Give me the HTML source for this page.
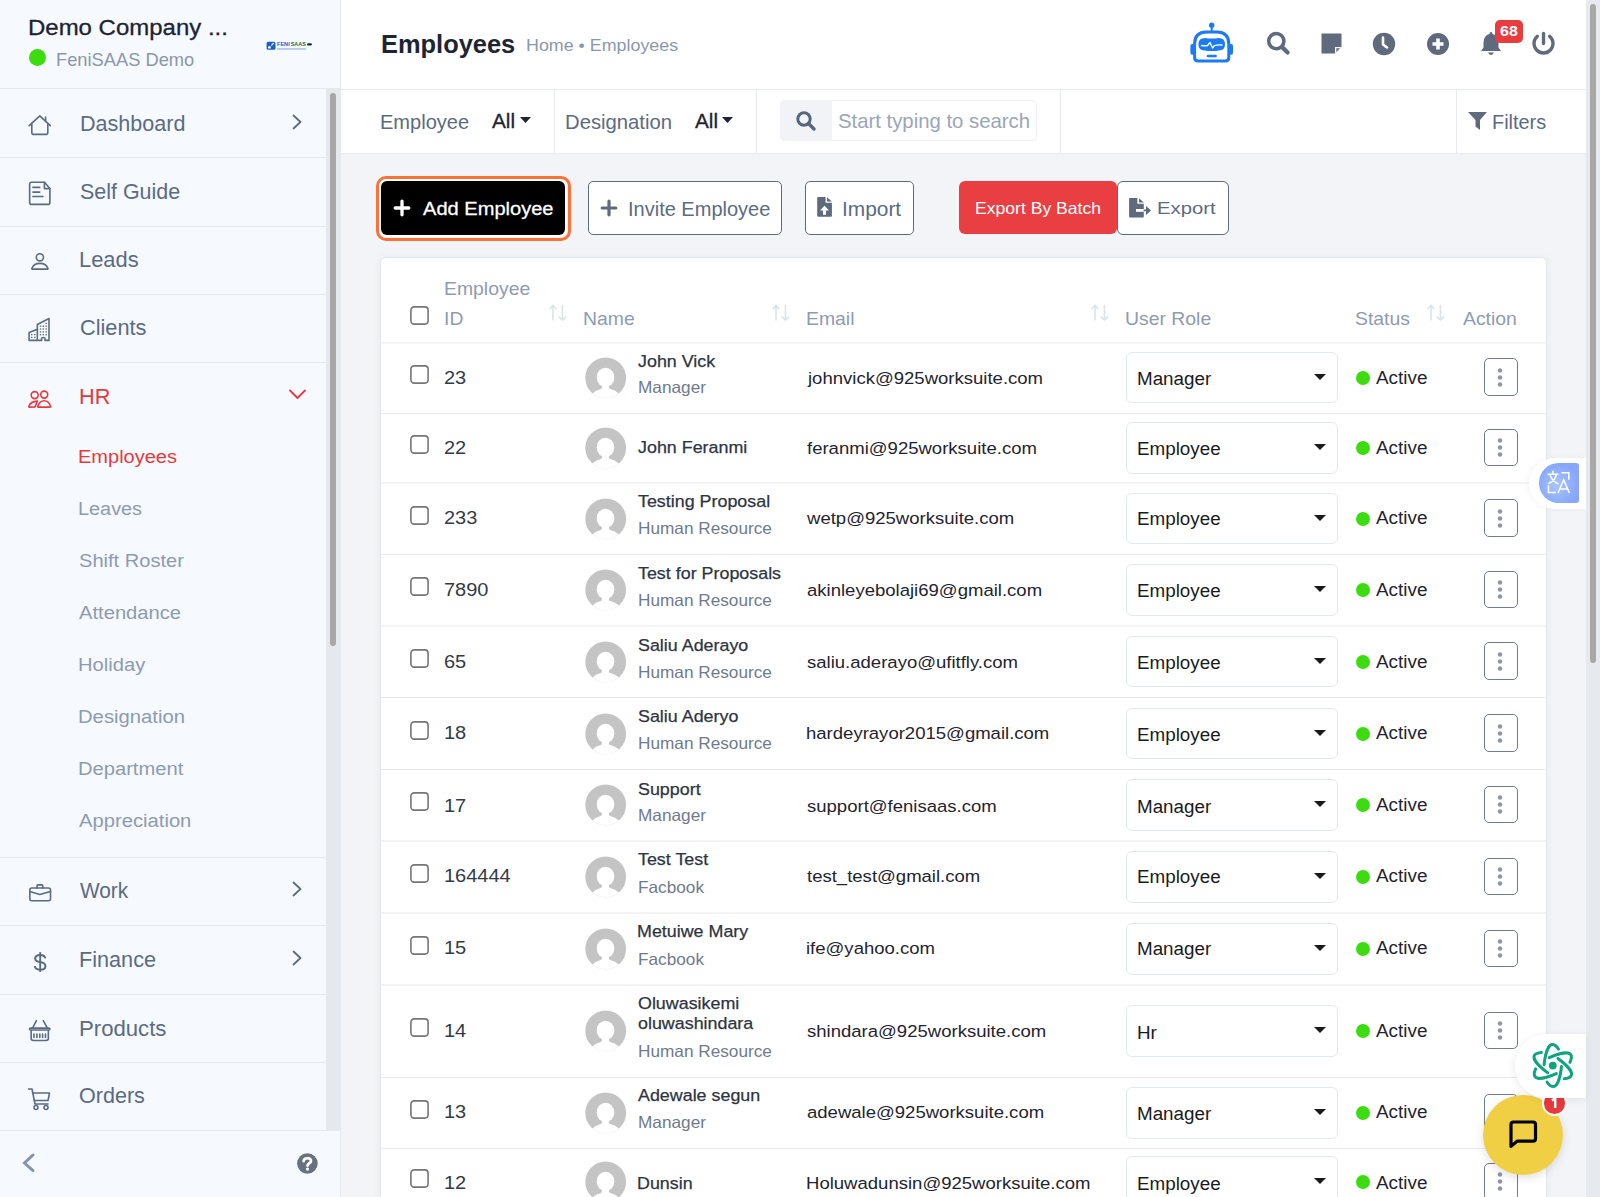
<!DOCTYPE html>
<html><head><meta charset="utf-8"><title>Employees</title>
<style>
html,body{margin:0;padding:0;width:1600px;height:1197px;overflow:hidden;background:#f2f4f7;font-family:"Liberation Sans", sans-serif;}
.b{position:absolute;display:block;}
.t{position:absolute;white-space:nowrap;line-height:1;font-family:"Liberation Sans", sans-serif;transform-origin:0 0;}
</style></head><body>
<div class="b" style="left:0px;top:0px;width:340px;height:1197px;background:#f6f9fe"></div>
<div class="b" style="left:340px;top:0px;width:1px;height:1197px;background:#e6eaf0"></div>
<div class="b" style="left:341px;top:0px;width:1245px;height:89px;background:#fff"></div>
<div class="b" style="left:341px;top:89px;width:1245px;height:1px;background:#e8ecf1"></div>
<div class="b" style="left:341px;top:90px;width:1245px;height:63px;background:#fff"></div>
<div class="b" style="left:341px;top:153px;width:1245px;height:1px;background:#e8ecf1"></div>
<div class="b" style="left:341px;top:154px;width:1245px;height:1043px;background:#f2f4f7"></div>
<div class="t" style="left:27.88px;top:16.00px;font-size:22.80px;color:#1c2433;font-weight:400;transform:scaleX(1.0517);-webkit-text-stroke:0.3px #1c2433">Demo Company ...</div>
<div class="b" style="left:28.5px;top:48.5px;width:17px;height:17px;background:#3ddc10;border-radius:50%"></div>
<div class="t" style="left:56.37px;top:51.00px;font-size:18.20px;color:#8a97ab;font-weight:400;transform:scaleX(1.0059);">FeniSAAS Demo</div>
<svg class="b" style="left:262px;top:36px;" width="54" height="18" viewBox="0 0 54 18"><rect x="4.6" y="5.8" width="8.9" height="8" rx="1.6" fill="#1a5fc8"/><rect x="6.1" y="10.2" width="2.7" height="2.4" rx="0.5" fill="#fff"/><path d="M8.8 10 Q9.5 7 12.3 6.6 Q11.8 9.6 8.8 10 Z" fill="#fff"/>
<text x="15" y="10.2" font-family="Liberation Sans" font-size="5.7" font-weight="700" fill="#1d5cc0" textLength="12.7" lengthAdjust="spacingAndGlyphs">FENI</text>
<text x="28.7" y="10.2" font-family="Liberation Sans" font-size="5.7" font-weight="700" fill="#1c6b3a" textLength="15.2" lengthAdjust="spacingAndGlyphs">SAAS</text>
<rect x="45" y="7.3" width="4.9" height="2.2" rx="1.1" fill="#1a2b3a"/><rect x="15" y="12.25" width="28.9" height="1.4" fill="#5a86cf" opacity="0.55"/></svg>
<div class="b" style="left:0px;top:88px;width:340px;height:1px;background:#e6eaf0"></div>
<div class="b" style="left:326px;top:89px;width:14px;height:1041px;background:#e5e9ee"></div>
<div class="b" style="left:330px;top:93px;width:6px;height:553px;background:#a8a8a8;border-radius:3px"></div>
<div class="t" style="left:79.72px;top:112.00px;font-size:22.90px;color:#5b6b82;font-weight:400;transform:scaleX(0.9417);">Dashboard</div>
<svg class="b" style="left:291px;top:114.00000000000001px;" width="12" height="16" viewBox="0 0 12 16"><path d="M2.5 1.5 L9.5 8 L2.5 14.5" fill="none" stroke="#5b6b82" stroke-width="1.8" stroke-linecap="round" stroke-linejoin="round"/></svg>
<div class="b" style="left:0px;top:157px;width:326px;height:1px;background:#e6eaf0"></div>
<div class="t" style="left:79.93px;top:180.00px;font-size:22.90px;color:#5b6b82;font-weight:400;transform:scaleX(0.9365);">Self Guide</div>
<div class="b" style="left:0px;top:226px;width:326px;height:1px;background:#e6eaf0"></div>
<div class="t" style="left:78.89px;top:248.00px;font-size:22.90px;color:#5b6b82;font-weight:400;transform:scaleX(0.9551);">Leads</div>
<div class="b" style="left:0px;top:294px;width:326px;height:1px;background:#e6eaf0"></div>
<div class="t" style="left:79.58px;top:316.00px;font-size:22.90px;color:#5b6b82;font-weight:400;transform:scaleX(0.9500);">Clients</div>
<div class="b" style="left:0px;top:362px;width:326px;height:1px;background:#e6eaf0"></div>
<svg class="b" style="left:28px;top:112px;" width="24" height="26" viewBox="0 0 24 26"><path d="M1.2 13.7 L11.8 3.8 L22.3 13.7" fill="none" stroke="#5b6b82" stroke-width="1.6" stroke-linejoin="round" stroke-linecap="round"/><path d="M3.8 11.5 V20.4 Q3.8 22.4 5.8 22.4 H17.8 Q19.8 22.4 19.8 20.4 V11.5" fill="none" stroke="#5b6b82" stroke-width="1.6" stroke-linejoin="round" stroke-linecap="round"/><path d="M17.6 5 V9.5" fill="none" stroke="#5b6b82" stroke-width="1.6" stroke-linejoin="round" stroke-linecap="round" stroke-width="2"/></svg>
<svg class="b" style="left:28px;top:180px;" width="24" height="26" viewBox="0 0 24 26"><path d="M3.6 2.2 H16.4 L21.9 8.6 V22.4 Q21.9 24.4 19.9 24.4 H3.6 Q1.65 24.4 1.65 22.4 V4.2 Q1.65 2.2 3.6 2.2 Z" fill="none" stroke="#5b6b82" stroke-width="1.6" stroke-linejoin="round" stroke-linecap="round"/><path d="M16.4 2.2 V8.6 H21.9" fill="none" stroke="#5b6b82" stroke-width="1.6" stroke-linejoin="round" stroke-linecap="round" stroke-width="1.3"/><path d="M4.9 7.4 H11.8 M4.9 12.1 H11.8 M4.9 16.5 H15" fill="none" stroke="#5b6b82" stroke-width="1.6" stroke-linejoin="round" stroke-linecap="round"/></svg>
<svg class="b" style="left:30px;top:252px;" width="20" height="20" viewBox="0 0 20 20"><circle cx="9.9" cy="5.3" r="3.6" fill="none" stroke="#5b6b82" stroke-width="1.6" stroke-linejoin="round" stroke-linecap="round" stroke-width="1.5"/><path d="M2.3 17.1 Q1.5 17.1 1.9 16.2 Q4 11.4 9.9 11.4 Q15.8 11.4 17.9 16.2 Q18.3 17.1 17.5 17.1 Z" fill="none" stroke="#5b6b82" stroke-width="1.6" stroke-linejoin="round" stroke-linecap="round" stroke-width="1.5"/></svg>
<svg class="b" style="left:27px;top:317px;" width="25" height="25" viewBox="0 0 25 25"><path d="M2.1 23.4 V15.5 L10.35 12.3 V7.5 L22 1.5 V23.4 H18 V21.4 Q18 20.5 16.3 20.5 Q14.6 20.5 14.6 21.4 V23.4 Z M10.35 12.3 V23.4" fill="none" stroke="#5b6b82" stroke-width="1.6" stroke-linejoin="round" stroke-linecap="round"/><g fill="#5b6b82"><rect x="12.80" y="8.55" width="1.4" height="1.3"/><rect x="15.60" y="8.55" width="1.4" height="1.3"/><rect x="18.50" y="8.55" width="1.4" height="1.3"/><rect x="12.80" y="11.35" width="1.4" height="1.3"/><rect x="15.60" y="11.35" width="1.4" height="1.3"/><rect x="18.50" y="11.35" width="1.4" height="1.3"/><rect x="12.80" y="14.25" width="1.4" height="1.3"/><rect x="15.60" y="14.25" width="1.4" height="1.3"/><rect x="18.50" y="14.25" width="1.4" height="1.3"/><rect x="12.80" y="17.05" width="1.4" height="1.3"/><rect x="15.60" y="17.05" width="1.4" height="1.3"/><rect x="18.50" y="17.05" width="1.4" height="1.3"/><rect x="18.50" y="5.75" width="1.4" height="1.3"/><rect x="4.00" y="16.95" width="1.4" height="1.3"/><rect x="7.10" y="16.95" width="1.4" height="1.3"/><rect x="4.00" y="19.75" width="1.4" height="1.3"/><rect x="7.10" y="19.75" width="1.4" height="1.3"/></g></svg>
<svg class="b" style="left:27px;top:389px;" width="26" height="21" viewBox="0 0 26 21"><circle cx="7.7" cy="6.1" r="3.5" fill="none" stroke="#e8383d" stroke-width="1.6" stroke-linejoin="round" stroke-linecap="round" stroke-width="1.5"/><circle cx="17.2" cy="5.6" r="3.5" fill="none" stroke="#e8383d" stroke-width="1.6" stroke-linejoin="round" stroke-linecap="round" stroke-width="1.5"/><path d="M2.4 18.1 Q1.6 18.1 1.9 17.2 Q3.5 12.4 10.4 12.1 L8.1 17.9 Z" fill="none" stroke="#e8383d" stroke-width="1.6" stroke-linejoin="round" stroke-linecap="round" stroke-width="1.5"/><path d="M11.3 18.1 Q10.5 18.1 10.8 17.2 Q12.7 11.7 17.2 11.7 Q21.8 11.7 23.6 17.2 Q23.9 18.1 23.1 18.1 Z" fill="none" stroke="#e8383d" stroke-width="1.6" stroke-linejoin="round" stroke-linecap="round" stroke-width="1.5"/></svg>
<div class="t" style="left:79.20px;top:385.00px;font-size:22.90px;color:#e8383d;font-weight:400;transform:scaleX(0.9478);">HR</div>
<svg class="b" style="left:288px;top:388px;" width="19" height="12" viewBox="0 0 19 12"><path d="M2 2.5 L9.5 10 L17 2.5" fill="none" stroke="#e8383d" stroke-width="1.8" stroke-linecap="round" stroke-linejoin="round"/></svg>
<div class="t" style="left:77.84px;top:447.00px;font-size:19.20px;color:#e8383d;font-weight:400;transform:scaleX(1.0428);">Employees</div>
<div class="t" style="left:77.65px;top:499.00px;font-size:19.20px;color:#8d9bb0;font-weight:400;transform:scaleX(1.0349);">Leaves</div>
<div class="t" style="left:78.57px;top:551.00px;font-size:19.20px;color:#8d9bb0;font-weight:400;transform:scaleX(1.0471);">Shift Roster</div>
<div class="t" style="left:79.20px;top:603.00px;font-size:19.20px;color:#8d9bb0;font-weight:400;transform:scaleX(1.0512);">Attendance</div>
<div class="t" style="left:77.62px;top:655.00px;font-size:19.20px;color:#8d9bb0;font-weight:400;transform:scaleX(1.0507);">Holiday</div>
<div class="t" style="left:77.62px;top:707.00px;font-size:19.20px;color:#8d9bb0;font-weight:400;transform:scaleX(1.0554);">Designation</div>
<div class="t" style="left:77.63px;top:759.00px;font-size:19.20px;color:#8d9bb0;font-weight:400;transform:scaleX(1.0498);">Department</div>
<div class="t" style="left:79.20px;top:811.00px;font-size:19.20px;color:#8d9bb0;font-weight:400;transform:scaleX(1.0534);">Appreciation</div>
<div class="b" style="left:0px;top:857px;width:326px;height:1px;background:#e6eaf0"></div>
<div class="t" style="left:80.40px;top:879.00px;font-size:22.90px;color:#5b6b82;font-weight:400;transform:scaleX(0.9088);">Work</div>
<svg class="b" style="left:291px;top:881.4000000000001px;" width="12" height="16" viewBox="0 0 12 16"><path d="M2.5 1.5 L9.5 8 L2.5 14.5" fill="none" stroke="#5b6b82" stroke-width="1.8" stroke-linecap="round" stroke-linejoin="round"/></svg>
<div class="b" style="left:0px;top:925px;width:326px;height:1px;background:#e6eaf0"></div>
<div class="t" style="left:78.71px;top:948.00px;font-size:22.90px;color:#5b6b82;font-weight:400;transform:scaleX(0.9460);">Finance</div>
<svg class="b" style="left:291px;top:950.2px;" width="12" height="16" viewBox="0 0 12 16"><path d="M2.5 1.5 L9.5 8 L2.5 14.5" fill="none" stroke="#5b6b82" stroke-width="1.8" stroke-linecap="round" stroke-linejoin="round"/></svg>
<div class="b" style="left:0px;top:994px;width:326px;height:1px;background:#e6eaf0"></div>
<div class="t" style="left:78.67px;top:1017.00px;font-size:22.90px;color:#5b6b82;font-weight:400;transform:scaleX(0.9674);">Products</div>
<div class="b" style="left:0px;top:1062px;width:326px;height:1px;background:#e6eaf0"></div>
<div class="t" style="left:79.39px;top:1084.00px;font-size:22.90px;color:#5b6b82;font-weight:400;transform:scaleX(0.9414);">Orders</div>
<svg class="b" style="left:27px;top:883px;" width="26" height="21" viewBox="0 0 26 21"><rect x="2.85" y="4.95" width="20.65" height="12.8" rx="2" fill="none" stroke="#5b6b82" stroke-width="1.6" stroke-linejoin="round" stroke-linecap="round" stroke-width="1.5"/><path d="M10.05 4.95 V2.6 Q10.05 1.85 10.8 1.85 H15 Q15.75 1.85 15.75 2.6 V4.95" fill="none" stroke="#5b6b82" stroke-width="1.6" stroke-linejoin="round" stroke-linecap="round" stroke-width="1.5"/><path d="M2.85 8.6 L12.8 11.4 L23.5 8.6" fill="none" stroke="#5b6b82" stroke-width="1.6" stroke-linejoin="round" stroke-linecap="round" stroke-width="1.5"/></svg>
<svg class="b" style="left:30px;top:950px;" width="20" height="24" viewBox="0 0 20 24"><path d="M15.3 8.3 Q14.8 4.9 10.2 4.9 Q5.2 4.9 5.2 8.5 Q5.2 11.3 10.2 12.1 Q15.4 12.9 15.4 16.2 Q15.4 19.7 10.2 19.7 Q5.1 19.7 4.8 16" fill="none" stroke="#5b6b82" stroke-width="2"/><path d="M10.2 2.1 V21.9" stroke="#5b6b82" stroke-width="1.9"/></svg>
<svg class="b" style="left:27px;top:1018px;" width="26" height="26" viewBox="0 0 26 26"><rect x="2.55" y="10.15" width="20.4" height="1.9" rx="0.95" fill="none" stroke="#5b6b82" stroke-width="1.6" stroke-linejoin="round" stroke-linecap="round" stroke-width="1.5"/><path d="M4.15 12.8 V20.6 Q4.15 22.55 6.4 22.55 H19.1 Q21.35 22.55 21.35 20.6 V12.8" fill="none" stroke="#5b6b82" stroke-width="1.6" stroke-linejoin="round" stroke-linecap="round" stroke-width="1.5"/><path d="M9.4 2.6 L5.8 9.6 M16.3 2.6 L20.1 9.6" fill="none" stroke="#5b6b82" stroke-width="1.6" stroke-linejoin="round" stroke-linecap="round" stroke-width="1.5"/><path d="M7 16.1 V19.5 M9.9 16.1 V19.5 M12.8 16.1 V19.5 M15.6 16.1 V19.5 M18.5 16.1 V19.5" fill="none" stroke="#5b6b82" stroke-width="1.6" stroke-linejoin="round" stroke-linecap="round" stroke-width="1.6"/></svg>
<svg class="b" style="left:27px;top:1086.8px;" width="25" height="24" viewBox="0 0 25 24"><path d="M1.5 2 H5 L8 17 H21" fill="none" stroke="#5b6b82" stroke-width="1.6" stroke-linejoin="round" stroke-linecap="round"/><path d="M5.8 6 H22.5 L21 13.5 H7.3" fill="none" stroke="#5b6b82" stroke-width="1.6" stroke-linejoin="round" stroke-linecap="round"/><circle cx="9" cy="20.5" r="2" fill="none" stroke="#5b6b82" stroke-width="1.6" stroke-linejoin="round" stroke-linecap="round"/><circle cx="19" cy="20.5" r="2" fill="none" stroke="#5b6b82" stroke-width="1.6" stroke-linejoin="round" stroke-linecap="round"/></svg>
<div class="b" style="left:0px;top:1130px;width:340px;height:67px;background:#f6f9fe"></div>
<div class="b" style="left:0px;top:1130px;width:340px;height:1px;background:#e6eaf0"></div>
<svg class="b" style="left:20px;top:1150px;" width="18" height="26" viewBox="0 0 18 26"><path d="M13 5 L4.5 13 L13 20.6" fill="none" stroke="#8794a8" stroke-width="3" stroke-linecap="round" stroke-linejoin="miter"/></svg>
<svg class="b" style="left:296px;top:1151.5px;" width="23" height="23" viewBox="0 0 23 23"><circle cx="11.4" cy="11.5" r="10.3" fill="#69717e"/><path d="M7.6 9.2 C7.9 5.3 15.3 5.2 15 9.1 C14.8 11.2 11.7 11.6 11.5 13.6" fill="none" stroke="#fff" stroke-width="2.7" stroke-linecap="round"/><circle cx="11.5" cy="17.1" r="1.6" fill="#fff"/></svg>
<div class="t" style="left:381.16px;top:31.00px;font-size:26.70px;color:#1d2534;font-weight:700;transform:scaleX(0.9524);">Employees</div>
<div class="t" style="left:526.40px;top:37.00px;font-size:17.10px;color:#8a97ab;font-weight:400;transform:scaleX(1.0443);">Home • Employees</div>
<svg class="b" style="left:1189px;top:21px;" width="46" height="43" viewBox="0 0 46 43"><circle cx="22.7" cy="4.3" r="2.7" fill="#1b7bf3"/><rect x="21.7" y="5" width="2" height="6" fill="#1b7bf3"/>
<path d="M9.2 40 H36.2 Q39.8 40 39.8 36.4 V23 Q39.8 11 28 11 H17.4 Q5.6 11 5.6 23 V36.4 Q5.6 40 9.2 40 Z" fill="none" stroke="#1b7bf3" stroke-width="3"/>
<rect x="1.4" y="23" width="4" height="10.7" rx="1.8" fill="#1b7bf3"/><rect x="40" y="23" width="4" height="10.7" rx="1.8" fill="#1b7bf3"/>
<path d="M9.4 23 Q9.4 17 16 17 Q22.7 18 29.5 17 Q36 17 36 23 Q36 29.5 30 29.5 Q22.7 30.5 15.5 29.5 Q9.4 29.5 9.4 23 Z" fill="#1b7bf3"/>
<path d="M12.5 24.5 Q15.5 25 18.5 24.5 L21 21.5 L23.5 27 L25.5 24.5 Q29 23.5 33 24" fill="none" stroke="#fff" stroke-width="1.3" stroke-linejoin="round" stroke-linecap="round"/>
<rect x="17.7" y="33.7" width="10.2" height="2.5" rx="1.2" fill="#1b7bf3"/></svg>
<svg class="b" style="left:1265px;top:30px;" width="28" height="28" viewBox="0 0 28 28"><circle cx="11.3" cy="11.2" r="7.6" fill="none" stroke="#5f6b7c" stroke-width="3.5"/><path d="M17 17 L22.6 22.6" stroke="#5f6b7c" stroke-width="4.2" stroke-linecap="round"/></svg>
<svg class="b" style="left:1320px;top:32px;" width="23" height="23" viewBox="0 0 23 23"><path d="M1.5 1.5 H21.5 V15 L15 21.5 H1.5 Z" fill="#5f6b7c"/><path d="M15 21.5 V15 H21.5" fill="#fff"/><path d="M16.3 20 V16.3 H20" fill="#5f6b7c"/></svg>
<svg class="b" style="left:1372px;top:32px;" width="24" height="24" viewBox="0 0 24 24"><circle cx="12" cy="12" r="11.2" fill="#5f6b7c"/><path d="M11 5.5 V12.5 L15 15.5" fill="none" stroke="#fff" stroke-width="2.6" stroke-linecap="round" stroke-linejoin="round"/></svg>
<svg class="b" style="left:1426px;top:32px;" width="24" height="24" viewBox="0 0 24 24"><circle cx="12" cy="12" r="11" fill="#5f6b7c"/><path d="M12 6.5 V17.5 M6.5 12 H17.5" stroke="#fff" stroke-width="3.6"/></svg>
<svg class="b" style="left:1479px;top:30px;" width="24" height="26" viewBox="0 0 24 26"><path d="M12 2 Q13.5 2 13.5 4 Q19.5 5.5 19.5 12.5 V17.5 L22 21 H2 L4.5 17.5 V12.5 Q4.5 5.5 10.5 4 Q10.5 2 12 2 Z" fill="#5f6b7c"/><path d="M9 22.5 H15 Q13.5 25 12 25 Q10.5 25 9 22.5 Z" fill="#5f6b7c"/></svg>
<div class="b" style="left:1495px;top:20px;width:28px;height:22.5px;background:#ea3b3f;border-radius:5px"></div>
<div class="t" style="left:1500.10px;top:23.00px;font-size:15.50px;color:#fff;font-weight:700;transform:scaleX(1.0324);">68</div>
<svg class="b" style="left:1531px;top:31px;" width="25" height="26" viewBox="0 0 25 26"><path d="M6.4 5.2 A9.5 9.5 0 1 0 18.6 5.2" fill="none" stroke="#5f6b7c" stroke-width="3.3" stroke-linecap="round"/><path d="M12.5 2.3 V12.6" stroke="#5f6b7c" stroke-width="3.3" stroke-linecap="round"/></svg>
<div class="b" style="left:1586px;top:0px;width:14px;height:1197px;background:#e6eaef"></div>
<div class="b" style="left:1590px;top:4px;width:6px;height:659px;background:#a8a8a8;border-radius:3px"></div>
<div class="t" style="left:380.43px;top:111.00px;font-size:21.00px;color:#5b6b82;font-weight:400;transform:scaleX(0.9544);">Employee</div>
<div class="t" style="left:492.00px;top:111.00px;font-size:20.30px;color:#1d2534;font-weight:400;transform:scaleX(1.0249);-webkit-text-stroke:0.3px #1d2534">All</div>
<svg class="b" style="left:519px;top:116px;" width="13" height="8" viewBox="0 0 13 8"><path d="M1 1 H12 L6.5 7 Z" fill="#1d2534"/></svg>
<div class="b" style="left:554px;top:90px;width:1px;height:63px;background:#e8ecf1"></div>
<div class="t" style="left:565.42px;top:111.00px;font-size:21.00px;color:#5b6b82;font-weight:400;transform:scaleX(0.9645);">Designation</div>
<div class="t" style="left:695.00px;top:111.00px;font-size:20.30px;color:#1d2534;font-weight:400;transform:scaleX(1.0249);-webkit-text-stroke:0.3px #1d2534">All</div>
<svg class="b" style="left:721px;top:116px;" width="13" height="8" viewBox="0 0 13 8"><path d="M1 1 H12 L6.5 7 Z" fill="#1d2534"/></svg>
<div class="b" style="left:756px;top:90px;width:1px;height:63px;background:#e8ecf1"></div>
<div class="b" style="left:780px;top:100px;width:257px;height:41px;background:#fff;border:1px solid #eceff3;border-radius:5px;box-sizing:border-box"></div>
<div class="b" style="left:780px;top:100px;width:52px;height:41px;background:#f1f3f6;border-radius:5px 0 0 5px"></div>
<svg class="b" style="left:795px;top:110px;" width="22" height="22" viewBox="0 0 22 22"><circle cx="9" cy="9" r="6.2" fill="none" stroke="#56667d" stroke-width="3"/><path d="M13.5 13.5 L19 19" stroke="#56667d" stroke-width="3.4" stroke-linecap="round"/></svg>
<div class="t" style="left:837.96px;top:111.00px;font-size:20.30px;color:#9aa6b8;font-weight:400;transform:scaleX(1.0019);">Start typing to search</div>
<div class="b" style="left:1060px;top:90px;width:1px;height:63px;background:#e8ecf1"></div>
<div class="b" style="left:1456px;top:90px;width:1px;height:63px;background:#e8ecf1"></div>
<svg class="b" style="left:1467px;top:111px;" width="21" height="20" viewBox="0 0 21 20"><path d="M1 1 H20 L13 9 V19 L8.5 15.5 V9 Z" fill="#5f6b7c"/></svg>
<div class="t" style="left:1491.95px;top:113.00px;font-size:19.90px;color:#5b6b82;font-weight:400;transform:scaleX(1.0001);">Filters</div>
<div class="b" style="left:375.5px;top:175.5px;width:195px;height:65px;border:3.5px solid #fb7138;border-radius:10px;box-sizing:border-box"></div>
<div class="b" style="left:379px;top:179px;width:188px;height:58px;border:2px solid #fff;border-radius:8px;box-sizing:border-box"></div>
<div class="b" style="left:381px;top:181px;width:184px;height:54px;background:#000;border-radius:6px"></div>
<svg class="b" style="left:392px;top:198px;" width="20" height="20" viewBox="0 0 20 20"><path d="M10 3.2 V16.8 M3.2 10 H16.8" stroke="#fff" stroke-width="3.3" stroke-linecap="round"/></svg>
<div class="t" style="left:422.50px;top:199.00px;font-size:19.20px;color:#fff;font-weight:400;transform:scaleX(1.0460);-webkit-text-stroke:0.3px #fff">Add Employee</div>
<div class="b" style="left:588px;top:181px;width:194px;height:54px;background:#fff;border:1px solid #5e6b7e;border-radius:5px;box-sizing:border-box"></div>
<svg class="b" style="left:599px;top:198px;" width="20" height="20" viewBox="0 0 20 20"><path d="M10 3.2 V16.8 M3.2 10 H16.8" stroke="#5e6b7e" stroke-width="3.2" stroke-linecap="round"/></svg>
<div class="t" style="left:627.64px;top:199.00px;font-size:20.60px;color:#5b6b82;font-weight:400;transform:scaleX(0.9714);">Invite Employee</div>
<div class="b" style="left:805px;top:181px;width:109px;height:54px;background:#fff;border:1px solid #5e6b7e;border-radius:5px;box-sizing:border-box"></div>
<svg class="b" style="left:810px;top:190px;" width="30" height="35" viewBox="0 0 30 35"><path d="M7.2 8 Q7.2 7 8.2 7 H15.6 V12.7 H21.9 V25.75 Q21.9 26.75 20.9 26.75 H8.2 Q7.2 26.75 7.2 25.75 Z" fill="#5f6b7c"/><path d="M17 7.2 L21.9 11.6 H17 Z" fill="#5f6b7c"/><path d="M10 20.4 L14.5 15.8 L19 20.4 H16 V24.7 H13 V20.4 Z" fill="#fff"/></svg>
<div class="t" style="left:841.97px;top:199.00px;font-size:20.60px;color:#5b6b82;font-weight:400;transform:scaleX(1.0134);">Import</div>
<div class="b" style="left:959px;top:181px;width:158px;height:53px;background:#ea3f42;border-radius:6px"></div>
<div class="t" style="left:974.93px;top:200.00px;font-size:16.50px;color:#fff;font-weight:400;transform:scaleX(1.0656);">Export By Batch</div>
<div class="b" style="left:1117px;top:181px;width:111.5px;height:54px;background:#fff;border:1px solid #5e6b7e;border-radius:6px;box-sizing:border-box"></div>
<svg class="b" style="left:1120px;top:190px;" width="34" height="35" viewBox="0 0 34 35"><path d="M9.1 9 Q9.1 8 10.1 8 H17.4 V13.8 H23.8 V26.6 Q23.8 27.6 22.8 27.6 H10.1 Q9.1 27.6 9.1 26.6 Z" fill="#5f6b7c"/><path d="M19 8.2 L23.8 12.6 H19 Z" fill="#5f6b7c"/><path d="M16 19 H23.8 V21.8 H16 Z" fill="#fff"/><path d="M23.8 19.6 H26.2 V21.2 H23.8 Z M26 15.9 L31.1 20.4 L26 24.9 Z" fill="#5f6b7c"/></svg>
<div class="t" style="left:1156.82px;top:200.00px;font-size:17.40px;color:#5b6b82;font-weight:400;transform:scaleX(1.1656);">Export</div>
<div class="b" style="left:381px;top:258px;width:1165px;height:1000px;background:#fff;border-radius:5px;box-shadow:0 0 0 1px #e4e8ee, 0 0 9px rgba(70,90,120,0.07)"></div>
<svg class="b" style="left:409.5px;top:306px;" width="19" height="19" viewBox="0 0 19 19"><rect x="0.9" y="0.9" width="17.2" height="17.2" rx="3.3" fill="#fff" stroke="#767676" stroke-width="1.6"/></svg>
<div class="t" style="left:444.29px;top:280.00px;font-size:18.50px;color:#8e9bb0;font-weight:400;transform:scaleX(1.0478);">Employee</div>
<div class="t" style="left:444.29px;top:310.00px;font-size:18.50px;color:#8e9bb0;font-weight:400;transform:scaleX(1.0478);">ID</div>
<svg class="b" style="left:548.5px;top:303.5px;" width="18" height="18" viewBox="0 0 18 18"><g fill="none" stroke="#dde2ea" stroke-width="1.6"><path d="M4 16.4 V1.2 M0.6 5 L4 1.4 L7.4 5"/><path d="M13.4 0.9 V16.3 M9.9 12.6 L13.4 16.2 L16.9 12.6"/></g></svg>
<div class="t" style="left:583.19px;top:310.00px;font-size:18.50px;color:#8e9bb0;font-weight:400;transform:scaleX(1.0478);">Name</div>
<svg class="b" style="left:772px;top:303.5px;" width="18" height="18" viewBox="0 0 18 18"><g fill="none" stroke="#dde2ea" stroke-width="1.6"><path d="M4 16.4 V1.2 M0.6 5 L4 1.4 L7.4 5"/><path d="M13.4 0.9 V16.3 M9.9 12.6 L13.4 16.2 L16.9 12.6"/></g></svg>
<div class="t" style="left:806.49px;top:310.00px;font-size:18.50px;color:#8e9bb0;font-weight:400;transform:scaleX(1.0478);">Email</div>
<svg class="b" style="left:1090.5px;top:303.5px;" width="18" height="18" viewBox="0 0 18 18"><g fill="none" stroke="#dde2ea" stroke-width="1.6"><path d="M4 16.4 V1.2 M0.6 5 L4 1.4 L7.4 5"/><path d="M13.4 0.9 V16.3 M9.9 12.6 L13.4 16.2 L16.9 12.6"/></g></svg>
<div class="t" style="left:1125.09px;top:310.00px;font-size:18.50px;color:#8e9bb0;font-weight:400;transform:scaleX(1.0478);">User Role</div>
<div class="t" style="left:1354.89px;top:310.00px;font-size:18.50px;color:#8e9bb0;font-weight:400;transform:scaleX(1.0478);">Status</div>
<svg class="b" style="left:1427px;top:303.5px;" width="18" height="18" viewBox="0 0 18 18"><g fill="none" stroke="#dde2ea" stroke-width="1.6"><path d="M4 16.4 V1.2 M0.6 5 L4 1.4 L7.4 5"/><path d="M13.4 0.9 V16.3 M9.9 12.6 L13.4 16.2 L16.9 12.6"/></g></svg>
<div class="t" style="left:1463.00px;top:310.00px;font-size:18.50px;color:#8e9bb0;font-weight:400;transform:scaleX(1.0478);">Action</div>
<div class="b" style="left:381px;top:342px;width:1165px;height:1px;background:rgba(232,234,238,0.60)"></div>
<div class="b" style="left:381px;top:343px;width:1165px;height:1px;background:rgba(232,234,238,0.40)"></div>
<svg class="b" style="left:409.5px;top:364.75px;" width="19" height="19" viewBox="0 0 19 19"><rect x="0.9" y="0.9" width="17.2" height="17.2" rx="3.3" fill="#fff" stroke="#767676" stroke-width="1.6"/></svg>
<div class="t" style="left:444.06px;top:368.00px;font-size:19.20px;color:#333a48;font-weight:400;transform:scaleX(1.0418);">23</div>
<svg class="b" style="left:584.5px;top:356.75px;" width="42" height="42" viewBox="0 0 42 42"><defs><clipPath id="cp"><circle cx="20.7" cy="20.85" r="20.4"/></clipPath></defs><circle cx="20.7" cy="20.85" r="20.4" fill="#c4c4c4"/><g clip-path="url(#cp)" fill="#fff"><ellipse cx="20.5" cy="20.4" rx="8.8" ry="9.6"/><path d="M14.5 33 Q17.8 31.5 17 28 H24 Q23.2 31.5 26.5 33 Z"/><ellipse cx="20.6" cy="43.5" rx="16" ry="12"/></g></svg>
<div class="t" style="left:638.12px;top:353.00px;font-size:17.40px;color:#2d3442;font-weight:400;transform:scaleX(1.0277);-webkit-text-stroke:0.25px #2d3442">John Vick</div>
<div class="t" style="left:638.06px;top:379.00px;font-size:16.50px;color:#6f7b8c;font-weight:400;transform:scaleX(1.0431);">Manager</div>
<div class="t" style="left:807.68px;top:370.00px;font-size:17.40px;color:#1f2430;font-weight:400;transform:scaleX(1.0653);">johnvick@925worksuite.com</div>
<div class="b" style="left:1126px;top:351.75px;width:212px;height:51.5px;border:1px solid #e3e8ef;border-radius:6px;box-sizing:border-box;background:#fff"></div>
<div class="t" style="left:1136.53px;top:369.00px;font-size:19.20px;color:#1a1a1a;font-weight:400;transform:scaleX(0.9800);">Manager</div>
<svg class="b" style="left:1313px;top:372.75px;" width="14" height="8" viewBox="0 0 14 8"><path d="M1 1 H13 L7 7 Z" fill="#1a1a1a"/></svg>
<div class="b" style="left:1355.5px;top:370.75px;width:14px;height:14px;background:#3ddc10;border-radius:50%"></div>
<div class="t" style="left:1375.70px;top:369.00px;font-size:18.30px;color:#1f2430;font-weight:400;transform:scaleX(1.0328);">Active</div>
<div class="b" style="left:1483.5px;top:358.25px;width:34px;height:37.5px;border:1px solid #6f7c90;border-radius:5px;box-sizing:border-box;background:#fff"></div>
<svg class="b" style="left:1495px;top:365.75px;" width="10" height="24" viewBox="0 0 10 24"><circle cx="5" cy="4.5" r="2.2" fill="#8b96a8"/><circle cx="5" cy="11.5" r="2.2" fill="#8b96a8"/><circle cx="5" cy="18.5" r="2.2" fill="#8b96a8"/></svg>
<div class="b" style="left:381px;top:413px;width:1165px;height:1px;background:rgba(232,234,238,1.00)"></div>
<svg class="b" style="left:409.5px;top:435.25px;" width="19" height="19" viewBox="0 0 19 19"><rect x="0.9" y="0.9" width="17.2" height="17.2" rx="3.3" fill="#fff" stroke="#767676" stroke-width="1.6"/></svg>
<div class="t" style="left:444.06px;top:438.00px;font-size:19.20px;color:#333a48;font-weight:400;transform:scaleX(1.0418);">22</div>
<svg class="b" style="left:584.5px;top:427.25px;" width="42" height="42" viewBox="0 0 42 42"><defs><clipPath id="cp"><circle cx="20.7" cy="20.85" r="20.4"/></clipPath></defs><circle cx="20.7" cy="20.85" r="20.4" fill="#c4c4c4"/><g clip-path="url(#cp)" fill="#fff"><ellipse cx="20.5" cy="20.4" rx="8.8" ry="9.6"/><path d="M14.5 33 Q17.8 31.5 17 28 H24 Q23.2 31.5 26.5 33 Z"/><ellipse cx="20.6" cy="43.5" rx="16" ry="12"/></g></svg>
<div class="t" style="left:638.12px;top:439.00px;font-size:17.40px;color:#2d3442;font-weight:400;transform:scaleX(1.0277);-webkit-text-stroke:0.25px #2d3442">John Feranmi</div>
<div class="t" style="left:807.10px;top:440.00px;font-size:17.40px;color:#1f2430;font-weight:400;transform:scaleX(1.0653);">feranmi@925worksuite.com</div>
<div class="b" style="left:1126px;top:422.25px;width:212px;height:51.5px;border:1px solid #e3e8ef;border-radius:6px;box-sizing:border-box;background:#fff"></div>
<div class="t" style="left:1136.53px;top:439.00px;font-size:19.20px;color:#1a1a1a;font-weight:400;transform:scaleX(0.9800);">Employee</div>
<svg class="b" style="left:1313px;top:443.25px;" width="14" height="8" viewBox="0 0 14 8"><path d="M1 1 H13 L7 7 Z" fill="#1a1a1a"/></svg>
<div class="b" style="left:1355.5px;top:441.25px;width:14px;height:14px;background:#3ddc10;border-radius:50%"></div>
<div class="t" style="left:1375.70px;top:439.00px;font-size:18.30px;color:#1f2430;font-weight:400;transform:scaleX(1.0328);">Active</div>
<div class="b" style="left:1483.5px;top:428.75px;width:34px;height:37.5px;border:1px solid #6f7c90;border-radius:5px;box-sizing:border-box;background:#fff"></div>
<svg class="b" style="left:1495px;top:436.25px;" width="10" height="24" viewBox="0 0 10 24"><circle cx="5" cy="4.5" r="2.2" fill="#8b96a8"/><circle cx="5" cy="11.5" r="2.2" fill="#8b96a8"/><circle cx="5" cy="18.5" r="2.2" fill="#8b96a8"/></svg>
<div class="b" style="left:381px;top:482px;width:1165px;height:1px;background:rgba(232,234,238,0.50)"></div>
<div class="b" style="left:381px;top:483px;width:1165px;height:1px;background:rgba(232,234,238,0.50)"></div>
<svg class="b" style="left:409.5px;top:505.75px;" width="19" height="19" viewBox="0 0 19 19"><rect x="0.9" y="0.9" width="17.2" height="17.2" rx="3.3" fill="#fff" stroke="#767676" stroke-width="1.6"/></svg>
<div class="t" style="left:444.06px;top:508.00px;font-size:19.20px;color:#333a48;font-weight:400;transform:scaleX(1.0418);">233</div>
<svg class="b" style="left:584.5px;top:497.75px;" width="42" height="42" viewBox="0 0 42 42"><defs><clipPath id="cp"><circle cx="20.7" cy="20.85" r="20.4"/></clipPath></defs><circle cx="20.7" cy="20.85" r="20.4" fill="#c4c4c4"/><g clip-path="url(#cp)" fill="#fff"><ellipse cx="20.5" cy="20.4" rx="8.8" ry="9.6"/><path d="M14.5 33 Q17.8 31.5 17 28 H24 Q23.2 31.5 26.5 33 Z"/><ellipse cx="20.6" cy="43.5" rx="16" ry="12"/></g></svg>
<div class="t" style="left:638.12px;top:493.00px;font-size:17.40px;color:#2d3442;font-weight:400;transform:scaleX(1.0277);-webkit-text-stroke:0.25px #2d3442">Testing Proposal</div>
<div class="t" style="left:638.06px;top:520.00px;font-size:16.50px;color:#6f7b8c;font-weight:400;transform:scaleX(1.0431);">Human Resource</div>
<div class="t" style="left:807.39px;top:510.00px;font-size:17.40px;color:#1f2430;font-weight:400;transform:scaleX(1.0653);">wetp@925worksuite.com</div>
<div class="b" style="left:1126px;top:492.75px;width:212px;height:51.5px;border:1px solid #e3e8ef;border-radius:6px;box-sizing:border-box;background:#fff"></div>
<div class="t" style="left:1136.53px;top:509.00px;font-size:19.20px;color:#1a1a1a;font-weight:400;transform:scaleX(0.9800);">Employee</div>
<svg class="b" style="left:1313px;top:513.75px;" width="14" height="8" viewBox="0 0 14 8"><path d="M1 1 H13 L7 7 Z" fill="#1a1a1a"/></svg>
<div class="b" style="left:1355.5px;top:511.75px;width:14px;height:14px;background:#3ddc10;border-radius:50%"></div>
<div class="t" style="left:1375.70px;top:509.00px;font-size:18.30px;color:#1f2430;font-weight:400;transform:scaleX(1.0328);">Active</div>
<div class="b" style="left:1483.5px;top:499.25px;width:34px;height:37.5px;border:1px solid #6f7c90;border-radius:5px;box-sizing:border-box;background:#fff"></div>
<svg class="b" style="left:1495px;top:506.75px;" width="10" height="24" viewBox="0 0 10 24"><circle cx="5" cy="4.5" r="2.2" fill="#8b96a8"/><circle cx="5" cy="11.5" r="2.2" fill="#8b96a8"/><circle cx="5" cy="18.5" r="2.2" fill="#8b96a8"/></svg>
<div class="b" style="left:381px;top:554px;width:1165px;height:1px;background:rgba(232,234,238,1.00)"></div>
<svg class="b" style="left:409.5px;top:577.25px;" width="19" height="19" viewBox="0 0 19 19"><rect x="0.9" y="0.9" width="17.2" height="17.2" rx="3.3" fill="#fff" stroke="#767676" stroke-width="1.6"/></svg>
<div class="t" style="left:444.06px;top:580.00px;font-size:19.20px;color:#333a48;font-weight:400;transform:scaleX(1.0418);">7890</div>
<svg class="b" style="left:584.5px;top:569.25px;" width="42" height="42" viewBox="0 0 42 42"><defs><clipPath id="cp"><circle cx="20.7" cy="20.85" r="20.4"/></clipPath></defs><circle cx="20.7" cy="20.85" r="20.4" fill="#c4c4c4"/><g clip-path="url(#cp)" fill="#fff"><ellipse cx="20.5" cy="20.4" rx="8.8" ry="9.6"/><path d="M14.5 33 Q17.8 31.5 17 28 H24 Q23.2 31.5 26.5 33 Z"/><ellipse cx="20.6" cy="43.5" rx="16" ry="12"/></g></svg>
<div class="t" style="left:638.12px;top:565.00px;font-size:17.40px;color:#2d3442;font-weight:400;transform:scaleX(1.0277);-webkit-text-stroke:0.25px #2d3442">Test for Proposals</div>
<div class="t" style="left:638.06px;top:592.00px;font-size:16.50px;color:#6f7b8c;font-weight:400;transform:scaleX(1.0431);">Human Resource</div>
<div class="t" style="left:806.52px;top:582.00px;font-size:17.40px;color:#1f2430;font-weight:400;transform:scaleX(1.0653);">akinleyebolaji69@gmail.com</div>
<div class="b" style="left:1126px;top:564.25px;width:212px;height:51.5px;border:1px solid #e3e8ef;border-radius:6px;box-sizing:border-box;background:#fff"></div>
<div class="t" style="left:1136.53px;top:581.00px;font-size:19.20px;color:#1a1a1a;font-weight:400;transform:scaleX(0.9800);">Employee</div>
<svg class="b" style="left:1313px;top:585.25px;" width="14" height="8" viewBox="0 0 14 8"><path d="M1 1 H13 L7 7 Z" fill="#1a1a1a"/></svg>
<div class="b" style="left:1355.5px;top:583.25px;width:14px;height:14px;background:#3ddc10;border-radius:50%"></div>
<div class="t" style="left:1375.70px;top:581.00px;font-size:18.30px;color:#1f2430;font-weight:400;transform:scaleX(1.0328);">Active</div>
<div class="b" style="left:1483.5px;top:570.75px;width:34px;height:37.5px;border:1px solid #6f7c90;border-radius:5px;box-sizing:border-box;background:#fff"></div>
<svg class="b" style="left:1495px;top:578.25px;" width="10" height="24" viewBox="0 0 10 24"><circle cx="5" cy="4.5" r="2.2" fill="#8b96a8"/><circle cx="5" cy="11.5" r="2.2" fill="#8b96a8"/><circle cx="5" cy="18.5" r="2.2" fill="#8b96a8"/></svg>
<div class="b" style="left:381px;top:625px;width:1165px;height:1px;background:rgba(232,234,238,0.50)"></div>
<div class="b" style="left:381px;top:626px;width:1165px;height:1px;background:rgba(232,234,238,0.50)"></div>
<svg class="b" style="left:409.5px;top:648.75px;" width="19" height="19" viewBox="0 0 19 19"><rect x="0.9" y="0.9" width="17.2" height="17.2" rx="3.3" fill="#fff" stroke="#767676" stroke-width="1.6"/></svg>
<div class="t" style="left:444.06px;top:652.00px;font-size:19.20px;color:#333a48;font-weight:400;transform:scaleX(1.0418);">65</div>
<svg class="b" style="left:584.5px;top:640.75px;" width="42" height="42" viewBox="0 0 42 42"><defs><clipPath id="cp"><circle cx="20.7" cy="20.85" r="20.4"/></clipPath></defs><circle cx="20.7" cy="20.85" r="20.4" fill="#c4c4c4"/><g clip-path="url(#cp)" fill="#fff"><ellipse cx="20.5" cy="20.4" rx="8.8" ry="9.6"/><path d="M14.5 33 Q17.8 31.5 17 28 H24 Q23.2 31.5 26.5 33 Z"/><ellipse cx="20.6" cy="43.5" rx="16" ry="12"/></g></svg>
<div class="t" style="left:637.84px;top:637.00px;font-size:17.40px;color:#2d3442;font-weight:400;transform:scaleX(1.0277);-webkit-text-stroke:0.25px #2d3442">Saliu Aderayo</div>
<div class="t" style="left:638.06px;top:664.00px;font-size:16.50px;color:#6f7b8c;font-weight:400;transform:scaleX(1.0431);">Human Resource</div>
<div class="t" style="left:806.81px;top:654.00px;font-size:17.40px;color:#1f2430;font-weight:400;transform:scaleX(1.0653);">saliu.aderayo@ufitfly.com</div>
<div class="b" style="left:1126px;top:635.75px;width:212px;height:51.5px;border:1px solid #e3e8ef;border-radius:6px;box-sizing:border-box;background:#fff"></div>
<div class="t" style="left:1136.53px;top:653.00px;font-size:19.20px;color:#1a1a1a;font-weight:400;transform:scaleX(0.9800);">Employee</div>
<svg class="b" style="left:1313px;top:656.75px;" width="14" height="8" viewBox="0 0 14 8"><path d="M1 1 H13 L7 7 Z" fill="#1a1a1a"/></svg>
<div class="b" style="left:1355.5px;top:654.75px;width:14px;height:14px;background:#3ddc10;border-radius:50%"></div>
<div class="t" style="left:1375.70px;top:653.00px;font-size:18.30px;color:#1f2430;font-weight:400;transform:scaleX(1.0328);">Active</div>
<div class="b" style="left:1483.5px;top:642.25px;width:34px;height:37.5px;border:1px solid #6f7c90;border-radius:5px;box-sizing:border-box;background:#fff"></div>
<svg class="b" style="left:1495px;top:649.75px;" width="10" height="24" viewBox="0 0 10 24"><circle cx="5" cy="4.5" r="2.2" fill="#8b96a8"/><circle cx="5" cy="11.5" r="2.2" fill="#8b96a8"/><circle cx="5" cy="18.5" r="2.2" fill="#8b96a8"/></svg>
<div class="b" style="left:381px;top:697px;width:1165px;height:1px;background:rgba(232,234,238,1.00)"></div>
<svg class="b" style="left:409.5px;top:720.5px;" width="19" height="19" viewBox="0 0 19 19"><rect x="0.9" y="0.9" width="17.2" height="17.2" rx="3.3" fill="#fff" stroke="#767676" stroke-width="1.6"/></svg>
<div class="t" style="left:443.75px;top:723.00px;font-size:19.20px;color:#333a48;font-weight:400;transform:scaleX(1.0418);">18</div>
<svg class="b" style="left:584.5px;top:712.5px;" width="42" height="42" viewBox="0 0 42 42"><defs><clipPath id="cp"><circle cx="20.7" cy="20.85" r="20.4"/></clipPath></defs><circle cx="20.7" cy="20.85" r="20.4" fill="#c4c4c4"/><g clip-path="url(#cp)" fill="#fff"><ellipse cx="20.5" cy="20.4" rx="8.8" ry="9.6"/><path d="M14.5 33 Q17.8 31.5 17 28 H24 Q23.2 31.5 26.5 33 Z"/><ellipse cx="20.6" cy="43.5" rx="16" ry="12"/></g></svg>
<div class="t" style="left:637.84px;top:708.00px;font-size:17.40px;color:#2d3442;font-weight:400;transform:scaleX(1.0277);-webkit-text-stroke:0.25px #2d3442">Saliu Aderyo</div>
<div class="t" style="left:638.06px;top:735.00px;font-size:16.50px;color:#6f7b8c;font-weight:400;transform:scaleX(1.0431);">Human Resource</div>
<div class="t" style="left:805.94px;top:725.00px;font-size:17.40px;color:#1f2430;font-weight:400;transform:scaleX(1.0653);">hardeyrayor2015@gmail.com</div>
<div class="b" style="left:1126px;top:707.5px;width:212px;height:51.5px;border:1px solid #e3e8ef;border-radius:6px;box-sizing:border-box;background:#fff"></div>
<div class="t" style="left:1136.53px;top:725.00px;font-size:19.20px;color:#1a1a1a;font-weight:400;transform:scaleX(0.9800);">Employee</div>
<svg class="b" style="left:1313px;top:728.5px;" width="14" height="8" viewBox="0 0 14 8"><path d="M1 1 H13 L7 7 Z" fill="#1a1a1a"/></svg>
<div class="b" style="left:1355.5px;top:726.5px;width:14px;height:14px;background:#3ddc10;border-radius:50%"></div>
<div class="t" style="left:1375.70px;top:724.00px;font-size:18.30px;color:#1f2430;font-weight:400;transform:scaleX(1.0328);">Active</div>
<div class="b" style="left:1483.5px;top:714.0px;width:34px;height:37.5px;border:1px solid #6f7c90;border-radius:5px;box-sizing:border-box;background:#fff"></div>
<svg class="b" style="left:1495px;top:721.5px;" width="10" height="24" viewBox="0 0 10 24"><circle cx="5" cy="4.5" r="2.2" fill="#8b96a8"/><circle cx="5" cy="11.5" r="2.2" fill="#8b96a8"/><circle cx="5" cy="18.5" r="2.2" fill="#8b96a8"/></svg>
<div class="b" style="left:381px;top:769px;width:1165px;height:1px;background:rgba(232,234,238,1.00)"></div>
<svg class="b" style="left:409.5px;top:792.25px;" width="19" height="19" viewBox="0 0 19 19"><rect x="0.9" y="0.9" width="17.2" height="17.2" rx="3.3" fill="#fff" stroke="#767676" stroke-width="1.6"/></svg>
<div class="t" style="left:443.75px;top:796.00px;font-size:19.20px;color:#333a48;font-weight:400;transform:scaleX(1.0418);">17</div>
<svg class="b" style="left:584.5px;top:784.25px;" width="42" height="42" viewBox="0 0 42 42"><defs><clipPath id="cp"><circle cx="20.7" cy="20.85" r="20.4"/></clipPath></defs><circle cx="20.7" cy="20.85" r="20.4" fill="#c4c4c4"/><g clip-path="url(#cp)" fill="#fff"><ellipse cx="20.5" cy="20.4" rx="8.8" ry="9.6"/><path d="M14.5 33 Q17.8 31.5 17 28 H24 Q23.2 31.5 26.5 33 Z"/><ellipse cx="20.6" cy="43.5" rx="16" ry="12"/></g></svg>
<div class="t" style="left:637.84px;top:781.00px;font-size:17.40px;color:#2d3442;font-weight:400;transform:scaleX(1.0277);-webkit-text-stroke:0.25px #2d3442">Support</div>
<div class="t" style="left:638.06px;top:807.00px;font-size:16.50px;color:#6f7b8c;font-weight:400;transform:scaleX(1.0431);">Manager</div>
<div class="t" style="left:806.81px;top:798.00px;font-size:17.40px;color:#1f2430;font-weight:400;transform:scaleX(1.0653);">support@fenisaas.com</div>
<div class="b" style="left:1126px;top:779.25px;width:212px;height:51.5px;border:1px solid #e3e8ef;border-radius:6px;box-sizing:border-box;background:#fff"></div>
<div class="t" style="left:1136.53px;top:797.00px;font-size:19.20px;color:#1a1a1a;font-weight:400;transform:scaleX(0.9800);">Manager</div>
<svg class="b" style="left:1313px;top:800.25px;" width="14" height="8" viewBox="0 0 14 8"><path d="M1 1 H13 L7 7 Z" fill="#1a1a1a"/></svg>
<div class="b" style="left:1355.5px;top:798.25px;width:14px;height:14px;background:#3ddc10;border-radius:50%"></div>
<div class="t" style="left:1375.70px;top:796.00px;font-size:18.30px;color:#1f2430;font-weight:400;transform:scaleX(1.0328);">Active</div>
<div class="b" style="left:1483.5px;top:785.75px;width:34px;height:37.5px;border:1px solid #6f7c90;border-radius:5px;box-sizing:border-box;background:#fff"></div>
<svg class="b" style="left:1495px;top:793.25px;" width="10" height="24" viewBox="0 0 10 24"><circle cx="5" cy="4.5" r="2.2" fill="#8b96a8"/><circle cx="5" cy="11.5" r="2.2" fill="#8b96a8"/><circle cx="5" cy="18.5" r="2.2" fill="#8b96a8"/></svg>
<div class="b" style="left:381px;top:840px;width:1165px;height:1px;background:rgba(232,234,238,0.50)"></div>
<div class="b" style="left:381px;top:841px;width:1165px;height:1px;background:rgba(232,234,238,0.50)"></div>
<svg class="b" style="left:409.5px;top:864.0px;" width="19" height="19" viewBox="0 0 19 19"><rect x="0.9" y="0.9" width="17.2" height="17.2" rx="3.3" fill="#fff" stroke="#767676" stroke-width="1.6"/></svg>
<div class="t" style="left:443.75px;top:866.00px;font-size:19.20px;color:#333a48;font-weight:400;transform:scaleX(1.0418);">164444</div>
<svg class="b" style="left:584.5px;top:856.0px;" width="42" height="42" viewBox="0 0 42 42"><defs><clipPath id="cp"><circle cx="20.7" cy="20.85" r="20.4"/></clipPath></defs><circle cx="20.7" cy="20.85" r="20.4" fill="#c4c4c4"/><g clip-path="url(#cp)" fill="#fff"><ellipse cx="20.5" cy="20.4" rx="8.8" ry="9.6"/><path d="M14.5 33 Q17.8 31.5 17 28 H24 Q23.2 31.5 26.5 33 Z"/><ellipse cx="20.6" cy="43.5" rx="16" ry="12"/></g></svg>
<div class="t" style="left:638.12px;top:851.00px;font-size:17.40px;color:#2d3442;font-weight:400;transform:scaleX(1.0277);-webkit-text-stroke:0.25px #2d3442">Test Test</div>
<div class="t" style="left:638.06px;top:879.00px;font-size:16.50px;color:#6f7b8c;font-weight:400;transform:scaleX(1.0431);">Facbook</div>
<div class="t" style="left:807.10px;top:868.00px;font-size:17.40px;color:#1f2430;font-weight:400;transform:scaleX(1.0653);">test_test@gmail.com</div>
<div class="b" style="left:1126px;top:851.0px;width:212px;height:51.5px;border:1px solid #e3e8ef;border-radius:6px;box-sizing:border-box;background:#fff"></div>
<div class="t" style="left:1136.53px;top:867.00px;font-size:19.20px;color:#1a1a1a;font-weight:400;transform:scaleX(0.9800);">Employee</div>
<svg class="b" style="left:1313px;top:872.0px;" width="14" height="8" viewBox="0 0 14 8"><path d="M1 1 H13 L7 7 Z" fill="#1a1a1a"/></svg>
<div class="b" style="left:1355.5px;top:870.0px;width:14px;height:14px;background:#3ddc10;border-radius:50%"></div>
<div class="t" style="left:1375.70px;top:867.00px;font-size:18.30px;color:#1f2430;font-weight:400;transform:scaleX(1.0328);">Active</div>
<div class="b" style="left:1483.5px;top:857.5px;width:34px;height:37.5px;border:1px solid #6f7c90;border-radius:5px;box-sizing:border-box;background:#fff"></div>
<svg class="b" style="left:1495px;top:865.0px;" width="10" height="24" viewBox="0 0 10 24"><circle cx="5" cy="4.5" r="2.2" fill="#8b96a8"/><circle cx="5" cy="11.5" r="2.2" fill="#8b96a8"/><circle cx="5" cy="18.5" r="2.2" fill="#8b96a8"/></svg>
<div class="b" style="left:381px;top:912px;width:1165px;height:1px;background:rgba(232,234,238,0.50)"></div>
<div class="b" style="left:381px;top:913px;width:1165px;height:1px;background:rgba(232,234,238,0.50)"></div>
<svg class="b" style="left:409.5px;top:936.0px;" width="19" height="19" viewBox="0 0 19 19"><rect x="0.9" y="0.9" width="17.2" height="17.2" rx="3.3" fill="#fff" stroke="#767676" stroke-width="1.6"/></svg>
<div class="t" style="left:443.75px;top:938.00px;font-size:19.20px;color:#333a48;font-weight:400;transform:scaleX(1.0418);">15</div>
<svg class="b" style="left:584.5px;top:928.0px;" width="42" height="42" viewBox="0 0 42 42"><defs><clipPath id="cp"><circle cx="20.7" cy="20.85" r="20.4"/></clipPath></defs><circle cx="20.7" cy="20.85" r="20.4" fill="#c4c4c4"/><g clip-path="url(#cp)" fill="#fff"><ellipse cx="20.5" cy="20.4" rx="8.8" ry="9.6"/><path d="M14.5 33 Q17.8 31.5 17 28 H24 Q23.2 31.5 26.5 33 Z"/><ellipse cx="20.6" cy="43.5" rx="16" ry="12"/></g></svg>
<div class="t" style="left:637.00px;top:923.00px;font-size:17.40px;color:#2d3442;font-weight:400;transform:scaleX(1.0277);-webkit-text-stroke:0.25px #2d3442">Metuiwe Mary</div>
<div class="t" style="left:638.06px;top:951.00px;font-size:16.50px;color:#6f7b8c;font-weight:400;transform:scaleX(1.0431);">Facbook</div>
<div class="t" style="left:805.94px;top:940.00px;font-size:17.40px;color:#1f2430;font-weight:400;transform:scaleX(1.0653);">ife@yahoo.com</div>
<div class="b" style="left:1126px;top:923.0px;width:212px;height:51.5px;border:1px solid #e3e8ef;border-radius:6px;box-sizing:border-box;background:#fff"></div>
<div class="t" style="left:1136.53px;top:939.00px;font-size:19.20px;color:#1a1a1a;font-weight:400;transform:scaleX(0.9800);">Manager</div>
<svg class="b" style="left:1313px;top:944.0px;" width="14" height="8" viewBox="0 0 14 8"><path d="M1 1 H13 L7 7 Z" fill="#1a1a1a"/></svg>
<div class="b" style="left:1355.5px;top:942.0px;width:14px;height:14px;background:#3ddc10;border-radius:50%"></div>
<div class="t" style="left:1375.70px;top:939.00px;font-size:18.30px;color:#1f2430;font-weight:400;transform:scaleX(1.0328);">Active</div>
<div class="b" style="left:1483.5px;top:929.5px;width:34px;height:37.5px;border:1px solid #6f7c90;border-radius:5px;box-sizing:border-box;background:#fff"></div>
<svg class="b" style="left:1495px;top:937.0px;" width="10" height="24" viewBox="0 0 10 24"><circle cx="5" cy="4.5" r="2.2" fill="#8b96a8"/><circle cx="5" cy="11.5" r="2.2" fill="#8b96a8"/><circle cx="5" cy="18.5" r="2.2" fill="#8b96a8"/></svg>
<div class="b" style="left:381px;top:984px;width:1165px;height:1px;background:rgba(232,234,238,0.50)"></div>
<div class="b" style="left:381px;top:985px;width:1165px;height:1px;background:rgba(232,234,238,0.50)"></div>
<svg class="b" style="left:409.5px;top:1018.25px;" width="19" height="19" viewBox="0 0 19 19"><rect x="0.9" y="0.9" width="17.2" height="17.2" rx="3.3" fill="#fff" stroke="#767676" stroke-width="1.6"/></svg>
<div class="t" style="left:443.75px;top:1021.00px;font-size:19.20px;color:#333a48;font-weight:400;transform:scaleX(1.0418);">14</div>
<svg class="b" style="left:584.5px;top:1010.25px;" width="42" height="42" viewBox="0 0 42 42"><defs><clipPath id="cp"><circle cx="20.7" cy="20.85" r="20.4"/></clipPath></defs><circle cx="20.7" cy="20.85" r="20.4" fill="#c4c4c4"/><g clip-path="url(#cp)" fill="#fff"><ellipse cx="20.5" cy="20.4" rx="8.8" ry="9.6"/><path d="M14.5 33 Q17.8 31.5 17 28 H24 Q23.2 31.5 26.5 33 Z"/><ellipse cx="20.6" cy="43.5" rx="16" ry="12"/></g></svg>
<div class="t" style="left:637.56px;top:995.00px;font-size:17.40px;color:#2d3442;font-weight:400;transform:scaleX(1.0277);-webkit-text-stroke:0.25px #2d3442">Oluwasikemi</div>
<div class="t" style="left:637.84px;top:1015.00px;font-size:17.40px;color:#2d3442;font-weight:400;transform:scaleX(1.0277);-webkit-text-stroke:0.25px #2d3442">oluwashindara</div>
<div class="t" style="left:638.06px;top:1043.00px;font-size:16.50px;color:#6f7b8c;font-weight:400;transform:scaleX(1.0431);">Human Resource</div>
<div class="t" style="left:806.81px;top:1023.00px;font-size:17.40px;color:#1f2430;font-weight:400;transform:scaleX(1.0653);">shindara@925worksuite.com</div>
<div class="b" style="left:1126px;top:1005.25px;width:212px;height:51.5px;border:1px solid #e3e8ef;border-radius:6px;box-sizing:border-box;background:#fff"></div>
<div class="t" style="left:1136.53px;top:1023.00px;font-size:19.20px;color:#1a1a1a;font-weight:400;transform:scaleX(0.9800);">Hr</div>
<svg class="b" style="left:1313px;top:1026.25px;" width="14" height="8" viewBox="0 0 14 8"><path d="M1 1 H13 L7 7 Z" fill="#1a1a1a"/></svg>
<div class="b" style="left:1355.5px;top:1024.25px;width:14px;height:14px;background:#3ddc10;border-radius:50%"></div>
<div class="t" style="left:1375.70px;top:1022.00px;font-size:18.30px;color:#1f2430;font-weight:400;transform:scaleX(1.0328);">Active</div>
<div class="b" style="left:1483.5px;top:1011.75px;width:34px;height:37.5px;border:1px solid #6f7c90;border-radius:5px;box-sizing:border-box;background:#fff"></div>
<svg class="b" style="left:1495px;top:1019.25px;" width="10" height="24" viewBox="0 0 10 24"><circle cx="5" cy="4.5" r="2.2" fill="#8b96a8"/><circle cx="5" cy="11.5" r="2.2" fill="#8b96a8"/><circle cx="5" cy="18.5" r="2.2" fill="#8b96a8"/></svg>
<div class="b" style="left:381px;top:1077px;width:1165px;height:1px;background:rgba(232,234,238,1.00)"></div>
<svg class="b" style="left:409.5px;top:1100.0px;" width="19" height="19" viewBox="0 0 19 19"><rect x="0.9" y="0.9" width="17.2" height="17.2" rx="3.3" fill="#fff" stroke="#767676" stroke-width="1.6"/></svg>
<div class="t" style="left:443.75px;top:1102.00px;font-size:19.20px;color:#333a48;font-weight:400;transform:scaleX(1.0418);">13</div>
<svg class="b" style="left:584.5px;top:1092.0px;" width="42" height="42" viewBox="0 0 42 42"><defs><clipPath id="cp"><circle cx="20.7" cy="20.85" r="20.4"/></clipPath></defs><circle cx="20.7" cy="20.85" r="20.4" fill="#c4c4c4"/><g clip-path="url(#cp)" fill="#fff"><ellipse cx="20.5" cy="20.4" rx="8.8" ry="9.6"/><path d="M14.5 33 Q17.8 31.5 17 28 H24 Q23.2 31.5 26.5 33 Z"/><ellipse cx="20.6" cy="43.5" rx="16" ry="12"/></g></svg>
<div class="t" style="left:638.40px;top:1087.00px;font-size:17.40px;color:#2d3442;font-weight:400;transform:scaleX(1.0277);-webkit-text-stroke:0.25px #2d3442">Adewale segun</div>
<div class="t" style="left:638.06px;top:1114.00px;font-size:16.50px;color:#6f7b8c;font-weight:400;transform:scaleX(1.0431);">Manager</div>
<div class="t" style="left:806.52px;top:1104.00px;font-size:17.40px;color:#1f2430;font-weight:400;transform:scaleX(1.0653);">adewale@925worksuite.com</div>
<div class="b" style="left:1126px;top:1087.0px;width:212px;height:51.5px;border:1px solid #e3e8ef;border-radius:6px;box-sizing:border-box;background:#fff"></div>
<div class="t" style="left:1136.53px;top:1104.00px;font-size:19.20px;color:#1a1a1a;font-weight:400;transform:scaleX(0.9800);">Manager</div>
<svg class="b" style="left:1313px;top:1108.0px;" width="14" height="8" viewBox="0 0 14 8"><path d="M1 1 H13 L7 7 Z" fill="#1a1a1a"/></svg>
<div class="b" style="left:1355.5px;top:1106.0px;width:14px;height:14px;background:#3ddc10;border-radius:50%"></div>
<div class="t" style="left:1375.70px;top:1103.00px;font-size:18.30px;color:#1f2430;font-weight:400;transform:scaleX(1.0328);">Active</div>
<div class="b" style="left:1483.5px;top:1093.5px;width:34px;height:37.5px;border:1px solid #6f7c90;border-radius:5px;box-sizing:border-box;background:#fff"></div>
<svg class="b" style="left:1495px;top:1101.0px;" width="10" height="24" viewBox="0 0 10 24"><circle cx="5" cy="4.5" r="2.2" fill="#8b96a8"/><circle cx="5" cy="11.5" r="2.2" fill="#8b96a8"/><circle cx="5" cy="18.5" r="2.2" fill="#8b96a8"/></svg>
<div class="b" style="left:381px;top:1148px;width:1165px;height:1px;background:rgba(232,234,238,1.00)"></div>
<svg class="b" style="left:409.5px;top:1169.25px;" width="19" height="19" viewBox="0 0 19 19"><rect x="0.9" y="0.9" width="17.2" height="17.2" rx="3.3" fill="#fff" stroke="#767676" stroke-width="1.6"/></svg>
<div class="t" style="left:443.75px;top:1173.00px;font-size:19.20px;color:#333a48;font-weight:400;transform:scaleX(1.0418);">12</div>
<svg class="b" style="left:584.5px;top:1161.25px;" width="42" height="42" viewBox="0 0 42 42"><defs><clipPath id="cp"><circle cx="20.7" cy="20.85" r="20.4"/></clipPath></defs><circle cx="20.7" cy="20.85" r="20.4" fill="#c4c4c4"/><g clip-path="url(#cp)" fill="#fff"><ellipse cx="20.5" cy="20.4" rx="8.8" ry="9.6"/><path d="M14.5 33 Q17.8 31.5 17 28 H24 Q23.2 31.5 26.5 33 Z"/><ellipse cx="20.6" cy="43.5" rx="16" ry="12"/></g></svg>
<div class="t" style="left:637.00px;top:1175.00px;font-size:17.40px;color:#2d3442;font-weight:400;transform:scaleX(1.0277);-webkit-text-stroke:0.25px #2d3442">Dunsin</div>
<div class="t" style="left:805.65px;top:1175.00px;font-size:17.40px;color:#1f2430;font-weight:400;transform:scaleX(1.0653);">Holuwadunsin@925worksuite.com</div>
<div class="b" style="left:1126px;top:1156.25px;width:212px;height:51.5px;border:1px solid #e3e8ef;border-radius:6px;box-sizing:border-box;background:#fff"></div>
<div class="t" style="left:1136.53px;top:1174.00px;font-size:19.20px;color:#1a1a1a;font-weight:400;transform:scaleX(0.9800);">Employee</div>
<svg class="b" style="left:1313px;top:1177.25px;" width="14" height="8" viewBox="0 0 14 8"><path d="M1 1 H13 L7 7 Z" fill="#1a1a1a"/></svg>
<div class="b" style="left:1355.5px;top:1175.25px;width:14px;height:14px;background:#3ddc10;border-radius:50%"></div>
<div class="t" style="left:1375.70px;top:1174.00px;font-size:18.30px;color:#1f2430;font-weight:400;transform:scaleX(1.0328);">Active</div>
<div class="b" style="left:1483.5px;top:1162.75px;width:34px;height:37.5px;border:1px solid #6f7c90;border-radius:5px;box-sizing:border-box;background:#fff"></div>
<svg class="b" style="left:1495px;top:1170.25px;" width="10" height="24" viewBox="0 0 10 24"><circle cx="5" cy="4.5" r="2.2" fill="#8b96a8"/><circle cx="5" cy="11.5" r="2.2" fill="#8b96a8"/><circle cx="5" cy="18.5" r="2.2" fill="#8b96a8"/></svg>
<div class="b" style="left:1528.5px;top:458px;width:57.5px;height:50.5px;background:#fff;border-radius:25.25px 0 0 25.25px;box-shadow:-2px 0 6px rgba(0,0,0,0.04)"></div>
<div class="b" style="left:1538.7px;top:463px;width:40px;height:39.5px;border-radius:19.75px 3px 3px 19.75px;background:radial-gradient(circle at 45% 55%, #a8c6fb 0%, #86a5fb 70%)"></div>
<svg class="b" style="left:1540px;top:462px;" width="40" height="40" viewBox="0 0 40 40"><g fill="none" stroke="#fff" stroke-width="1.5" stroke-linecap="square"><path d="M8.3 12.2 H17.7 M13 9.4 V12.2 M10.2 13.6 Q12.5 19.5 17.8 21.6 M16.2 13.6 Q14.2 19.5 9 21.2"/><path d="M22.2 10.7 H28.8 V17"/><path d="M8.5 24 V30.6 H15.2"/><path d="M18 31 L23.7 17.9 L29.4 31 M20 27 H27.4" stroke-linecap="butt"/></g></svg>
<div class="b" style="left:1483.3px;top:1094.5px;width:80px;height:80px;border-radius:50%;background:#f0cf45;box-shadow:0 3px 10px rgba(0,0,0,0.12)"></div>
<svg class="b" style="left:1507px;top:1118px;" width="32" height="32" viewBox="0 0 32 32"><path d="M4 28.4 V6.5 Q4 4 6.5 4 H26 Q28.5 4 28.5 6.5 V20.7 Q28.5 23.2 26 23.2 H10 Z" fill="none" stroke="#000" stroke-width="3.2" stroke-linejoin="round"/></svg>
<div class="b" style="left:1541.6px;top:1090.1px;width:25.8px;height:25.8px;border-radius:50%;background:#e8393d;box-shadow:0 0 0 0 #fff;border:2.4px solid #fff;box-sizing:border-box"></div>
<svg class="b" style="left:1549px;top:1095px;" width="12" height="16" viewBox="0 0 12 16"><path d="M2.8 5.4 L6.2 3.6 V13" fill="none" stroke="#fff" stroke-width="2.5" stroke-linejoin="miter"/></svg>
<div class="b" style="left:1514.5px;top:1034px;width:71.5px;height:63.5px;background:#fff;border-radius:31.75px 0 0 31.75px;box-shadow:-1px 2px 8px rgba(0,0,0,0.08)"></div>
<svg class="b" style="left:1530px;top:1043px;" width="46" height="46" viewBox="0 0 46 46"><g transform="translate(22.8 22.6)"><g transform="rotate(0)"><path d="M-8.7 -0.9 C-7.5 -12 -4.5 -21 -0.3 -21 C2 -21 4 -19 5.7 -16.5" fill="none" stroke="#10a37f" stroke-width="3" stroke-linecap="round"/></g><g transform="rotate(60)"><path d="M-8.7 -0.9 C-7.5 -12 -4.5 -21 -0.3 -21 C2 -21 4 -19 5.7 -16.5" fill="none" stroke="#10a37f" stroke-width="3" stroke-linecap="round"/></g><g transform="rotate(120)"><path d="M-8.7 -0.9 C-7.5 -12 -4.5 -21 -0.3 -21 C2 -21 4 -19 5.7 -16.5" fill="none" stroke="#10a37f" stroke-width="3" stroke-linecap="round"/></g><g transform="rotate(180)"><path d="M-8.7 -0.9 C-7.5 -12 -4.5 -21 -0.3 -21 C2 -21 4 -19 5.7 -16.5" fill="none" stroke="#10a37f" stroke-width="3" stroke-linecap="round"/></g><g transform="rotate(240)"><path d="M-8.7 -0.9 C-7.5 -12 -4.5 -21 -0.3 -21 C2 -21 4 -19 5.7 -16.5" fill="none" stroke="#10a37f" stroke-width="3" stroke-linecap="round"/></g><g transform="rotate(300)"><path d="M-8.7 -0.9 C-7.5 -12 -4.5 -21 -0.3 -21 C2 -21 4 -19 5.7 -16.5" fill="none" stroke="#10a37f" stroke-width="3" stroke-linecap="round"/></g><circle r="3.9" fill="#10a37f"/></g></svg>
</body></html>
